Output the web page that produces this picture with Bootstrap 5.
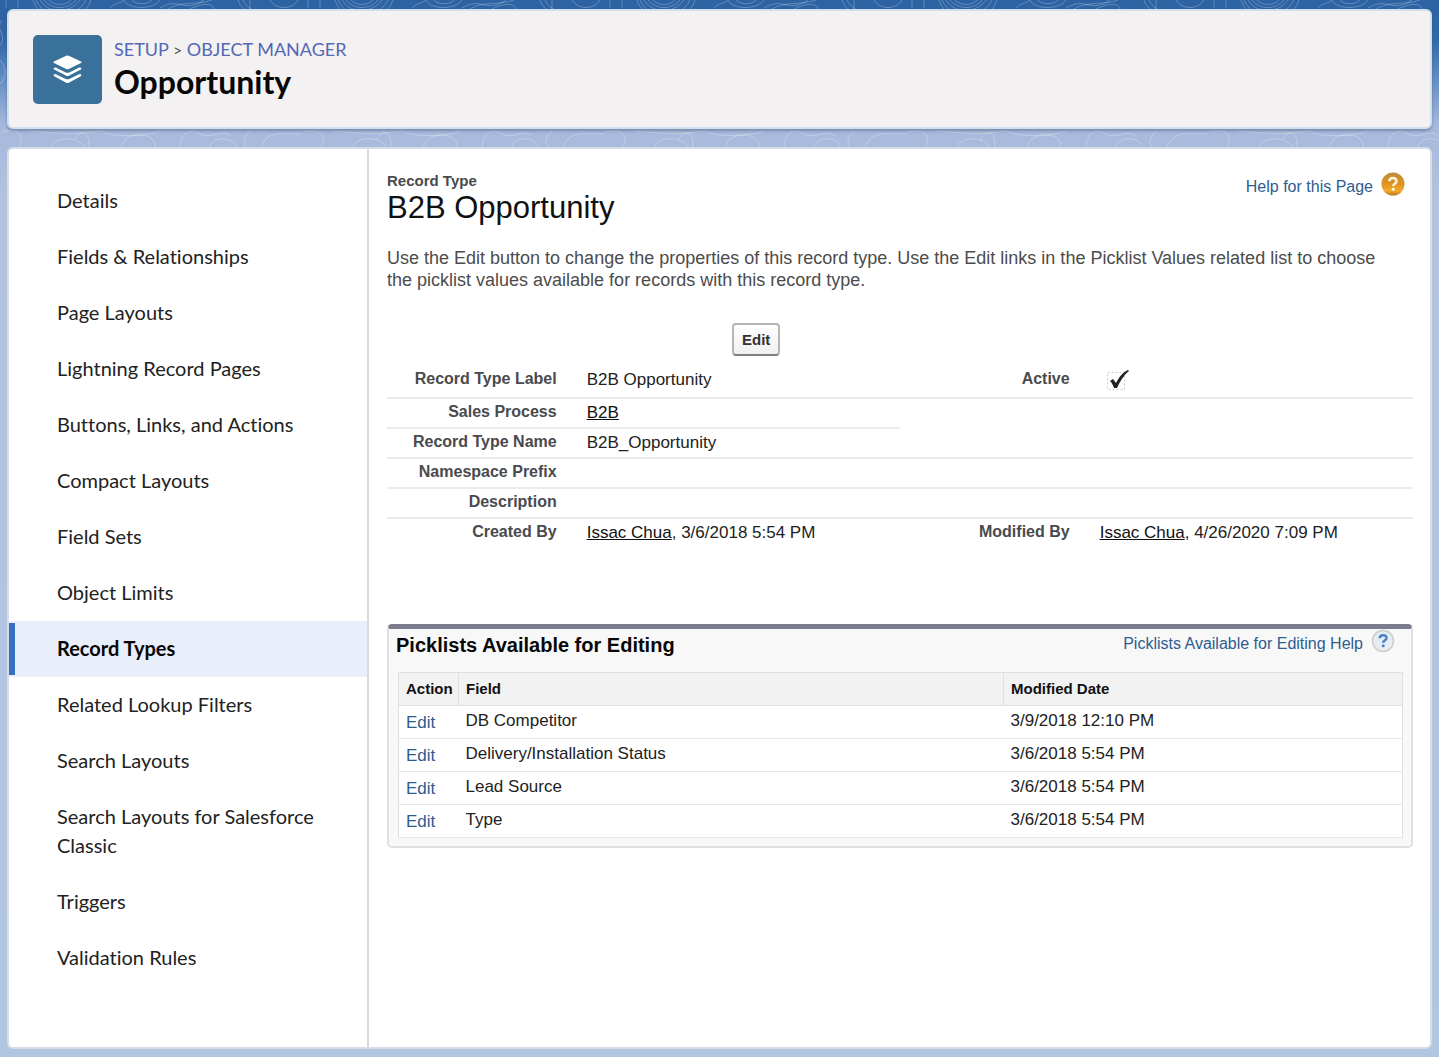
<!DOCTYPE html>
<html lang="en">
<head>
<meta charset="utf-8">
<meta name="viewport" content="width=device-width, initial-scale=1">
<title>Opportunity | Object Manager</title>
<link rel="stylesheet" href="https://cdn.jsdelivr.net/npm/bootstrap@5.3.0/dist/css/bootstrap.min.css">
<style>
body{font-family:"Liberation Sans",Arial,sans-serif;color:#222;background:linear-gradient(#2d62a3 0,#3167a8 40px,#668fc4 80px,#a6b9dc 125px,#b2c2e0 200px,#b1c6e1 100%)}
.page-shell{padding:9px 7px 8px;gap:18px}
.contours{position:absolute;top:0;left:0;width:100%;height:150px;z-index:-1}
.setup-head{background:#f3f1f1;border:2px solid #cfdfec;border-radius:6px;padding:24px 24px 23px;box-shadow:0 2px 3px rgba(70,80,110,.45);font-family:Lato,"Open Sans",sans-serif;font-variant-ligatures:none}
.obj-icon{width:69px;height:69px;border-radius:5px;background:#3a719b}
.crumbs{font-size:18px;line-height:28px;color:#555}
.crumbs a{color:#5468b4;text-decoration:none}
.obj-title{font-size:32px;line-height:36px;font-weight:700;color:#080707}
.panel{background:#fff;border:2px solid #d6dde6;border-radius:6px}
.side{width:360px;border-right:2px solid #d9dade;padding:24px 0 60px;font-family:Lato,"Open Sans",sans-serif;font-variant-ligatures:none}
.side a{display:block;position:relative;padding:13px 30px 14px 48px;font-size:20px;line-height:29px;color:#222;text-decoration:none}
.side a.active{background:#e8effa;font-weight:700;color:#080707}
.side a.active::before{content:"";position:absolute;left:0;top:2px;bottom:2px;width:6px;background:#3a6fbf}
.content{padding:23px 17px 40px 18px}
.eyebrow{font-size:15px;line-height:18px;font-weight:700;color:#4a4a4e}
.rt-name{font-size:31px;line-height:35px;color:#111}
.help-link{font-size:16px;line-height:24px;color:#2e5c91;text-decoration:none}
.help-link span{padding-top:3px}
.intro{font-size:18px;line-height:22px;color:#4c4c4c;margin-top:22px;padding-right:24px}
.btn-row{padding:32px 0 10px 345px}
.btn-edit{font-size:15px;line-height:19px;font-weight:700;color:#333;padding:5px 8px;border:2px solid #b5b5b5;border-bottom-color:#7f7f7f;border-radius:4px;background:linear-gradient(#fff,#f0f0f0)}
.facts{table-layout:fixed;width:100%}
.facts .c-label{width:18%}
.facts .c-value{width:32%}
.facts th,.facts td{height:30px;padding:2px 15px 0;border-bottom:2px solid #ececec;font-size:17px;line-height:24px;vertical-align:top}
.facts th{text-align:right;font-size:16px;font-weight:700;color:#4a4a4e;line-height:22px}
.facts td{color:#222}
.facts a{color:#111}
.facts .open,.facts tr:last-child>*{border-bottom:0}
.tick{appearance:none;display:block;width:24px;height:24px;margin:1px 0 4px 6px;background:url("data:image/svg+xml,%3Csvg xmlns='http://www.w3.org/2000/svg' viewBox='0 0 24 24'%3E%3Cpath d='M1.5 3.5h17v17h-17z' fill='none' stroke='%23ccc' stroke-dasharray='2 2'/%3E%3Cpath d='M4 12l3-2 3 4C13 8 17 3 22 1l1 1C18 6 14 12 11 19H8C7 16 6 14 4 12z' fill='%23222'/%3E%3C/svg%3E")}
.related{margin-top:76px;background:#f8f8f8;border:2px solid #e0e0e2;border-top:5px solid #7d7d92;border-radius:5px;padding:0 8px 8px 9px}
.related-head{height:43px;padding-right:8px}
.related h2{font-size:20px;line-height:32px;font-weight:700;color:#080808;margin:0 0 0 -2px}
.grid{border:1px solid #dfdfdf;background:#fff;font-size:17px;line-height:22px;color:#222;width:100%;table-layout:fixed}
.grid th{background:#f2f2f3;font-size:15px;color:#111;border:1px solid #e0e0e0;padding:5px 7px}
.grid td{border-bottom:1px solid #e6e6e6;padding:4px 7px 6px}
.grid .act{width:60px}
.grid td.act{padding:6px 0 4px 7px}
.grid td a{color:#2e5c91;text-decoration:none}
.grid .when{width:399px}
</style>
<script src="https://cdn.jsdelivr.net/npm/bootstrap@5.3.0/dist/js/bootstrap.bundle.min.js"></script>
</head>
<body>
<svg class="contours" aria-hidden="true"><defs><pattern id="topo" width="302" height="150" patternUnits="userSpaceOnUse"><g fill="none" stroke="#fff" stroke-opacity=".25"><path d="M6 0v8M18 0v8M40 0c8 14 30 14 40 0M44 0c8 10 24 10 32 0M49 0c6 6 16 6 22 0M36 0c8 20 40 20 50 0M33 0c8 26 50 26 58 0M110 8c6-6 10-4 14-8M124 0c4 10 30 10 36 0M132 0c4 5 16 5 20 0M160 8c20-12 24 6 44-8M166 10c16-10 30-4 46-10M214 9c-2-8-16-4-24 0M238 0c2 6 6 10 12 12M243 0c3 6 6 8 10 10M250 0v10M270 0c6 10 22 10 28 0"/><path d="M2 20c-8 10 6 14-2 26M0 60c7 8 7 16 0 24M2 132c20-6 24 10 14 18M30 131c24 2 48 4 70 0M50 150c0-14 30-16 36 0M74 140c8-14 18-6 14 10M100 131c18 8 50 4 60 0M122 150c-4-20 40-20 32 0M180 150c0-18 10-22 20-16s24-6 30 2M210 150c-2-12 20-16 26-4M250 131c-8 8-8 14 0 19M260 150c6-20 20-16 42-16"/></g></pattern></defs><rect width="100%" height="150" fill="url(#topo)"/></svg>
<div class="page-shell d-flex flex-column min-vh-100">
<header class="setup-head d-flex align-items-start">
<div class="obj-icon d-flex align-items-center justify-content-center flex-shrink-0">
<svg width="30" height="30" viewBox="0 0 30 30" fill="#fff" aria-hidden="true"><path d="M14.500.5q.7 0 1.300.3l12.200 5.700q1.200.8 0 1.600l-12.200 6q-1.300.5-2.600 0l-12.200-6q-1.200-.8 0-1.600l12.200-5.700q.6-.3 1.300-.3z"/><path d="M.8 13q.8-.9 2-.4l9.900 4.800q1.800.7 3.600 0l9.900-4.800q1.200-.5 2 .4.6.9-.4 1.600l-12 6.200q-1.300.5-2.600 0L1.200 14.600q-1-.7-.4-1.600z"/><path d="M.8 19.600q.8-.9 2-.4l9.900 4.800q1.800.7 3.600 0l9.900-4.800q1.200-.5 2 .4.6.9-.4 1.600l-12 6.500q-1.300.5-2.600 0L1.200 21.200q-1-.7-.4-1.600z"/></svg>
</div>
<div class="ms-2 ps-1">
<nav class="crumbs" aria-label="Breadcrumb"><a href="#">SETUP</a> <span class="fs-6">&gt;</span> <a href="#">OBJECT MANAGER</a></nav>
<h1 class="obj-title m-0">Opportunity</h1>
</div>
</header>
<div class="panel d-flex flex-grow-1">
<nav class="side flex-shrink-0" aria-label="Object settings">
<a href="#">Details</a>
<a href="#">Fields &amp; Relationships</a>
<a href="#">Page Layouts</a>
<a href="#">Lightning Record Pages</a>
<a href="#">Buttons, Links, and Actions</a>
<a href="#">Compact Layouts</a>
<a href="#">Field Sets</a>
<a href="#">Object Limits</a>
<a href="#" class="active" aria-current="page">Record Types</a>
<a href="#">Related Lookup Filters</a>
<a href="#">Search Layouts</a>
<a href="#">Search Layouts for Salesforce Classic</a>
<a href="#">Triggers</a>
<a href="#">Validation Rules</a>
</nav>
<main class="content flex-grow-1">
<div class="d-flex justify-content-between align-items-start">
<div>
<div class="eyebrow">Record Type</div>
<h2 class="rt-name m-0 fw-normal">B2B Opportunity</h2>
</div>
<a class="help-link d-flex gap-2 pe-2" href="#"><span>Help for this Page</span>
<svg width="24" height="24" viewBox="0 0 24 24" aria-hidden="true"><defs><linearGradient id="amber" x2="0" y2="1"><stop stop-color="#bd8b3c"/><stop offset=".5" stop-color="#df941f"/><stop offset=".8" stop-color="#f5aa2a"/><stop offset="1" stop-color="#b87524"/></linearGradient></defs><circle cx="12" cy="12" r="11.500" fill="url(#amber)"/><path d="M8.400 9.300C8.500 5 15.500 5 15.500 9c0 2.600-3.300 2.700-3.300 5" fill="none" stroke="#fff3d8" stroke-width="2.600"/><circle cx="12.200" cy="17.200" r="1.600" fill="#fff3d8"/></svg></a>
</div>
<p class="intro mb-0">Use the Edit button to change the properties of this record type. Use the Edit links in the Picklist Values related list to choose the picklist values available for records with this record type.</p>
<div class="btn-row d-flex"><button type="button" class="btn btn-edit">Edit</button></div>
<table class="facts">
<colgroup><col class="c-label"><col class="c-value"><col class="c-label"><col class="c-value"></colgroup>
<tbody>
<tr><th scope="row">Record Type Label</th><td>B2B Opportunity</td><th scope="row"><label for="active">Active</label></th><td><input class="tick" type="checkbox" id="active" checked disabled></td></tr>
<tr><th scope="row">Sales Process</th><td><a href="#">B2B</a></td><td class="open" colspan="2"></td></tr>
<tr><th scope="row">Record Type Name</th><td colspan="3">B2B_Opportunity</td></tr>
<tr><th scope="row">Namespace Prefix</th><td colspan="3"></td></tr>
<tr><th scope="row">Description</th><td colspan="3"></td></tr>
<tr><th scope="row">Created By</th><td><a href="#">Issac Chua</a>, 3/6/2018 5:54 PM</td><th scope="row">Modified By</th><td><a href="#">Issac Chua</a>, 4/26/2020 7:09 PM</td></tr>
</tbody>
</table>
<section class="related">
<div class="related-head d-flex justify-content-between align-items-start">
<h2>Picklists Available for Editing</h2>
<a class="help-link d-flex gap-2" href="#"><span>Picklists Available for Editing Help</span>
<svg width="24" height="24" viewBox="0 0 24 24" aria-hidden="true"><circle cx="12" cy="12" r="10.500" fill="#ecebe9" stroke="#cdccca" stroke-width="1.500"/><circle cx="12" cy="11.500" r="9" fill="#e4ecf5"/><path d="M8.700 9.300C8.800 5.200 15.500 5.200 15.500 9c0 2.500-3.300 2.600-3.300 4.700" fill="none" stroke="#4b7fc4" stroke-width="2.500"/><circle cx="12.200" cy="16.700" r="1.500" fill="#4b7fc4"/></svg></a>
</div>
<table class="grid">
<thead><tr><th class="act" scope="col">Action</th><th scope="col">Field</th><th class="when" scope="col">Modified Date</th></tr></thead>
<tbody>
<tr><td class="act"><a href="#">Edit</a></td><td>DB Competitor</td><td>3/9/2018 12:10 PM</td></tr>
<tr><td class="act"><a href="#">Edit</a></td><td>Delivery/Installation Status</td><td>3/6/2018 5:54 PM</td></tr>
<tr><td class="act"><a href="#">Edit</a></td><td>Lead Source</td><td>3/6/2018 5:54 PM</td></tr>
<tr><td class="act"><a href="#">Edit</a></td><td>Type</td><td>3/6/2018 5:54 PM</td></tr>
</tbody>
</table>
</section>
</main>
</div>
</div>
</body>
</html>
